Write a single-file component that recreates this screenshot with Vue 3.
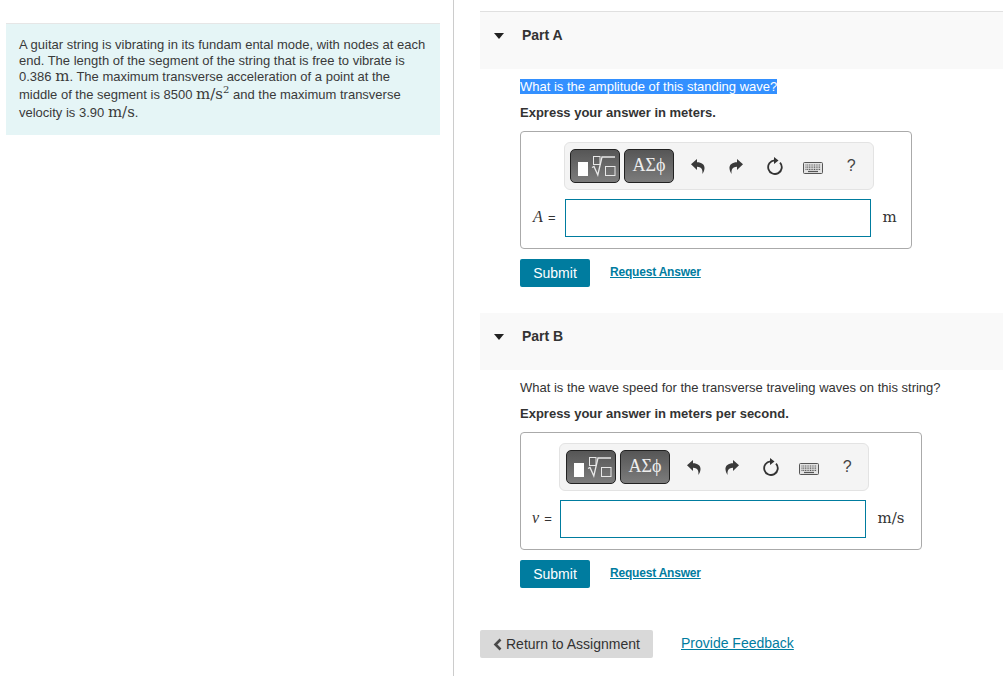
<template>
  <div class="page">
    <!-- problem statement -->
    <aside class="left">
      <div class="intro">
        <p>
          A guitar string is vibrating in its fundam ental mode, with nodes at each
          end. The length of the segment of the string that is free to vibrate is
          0.386 <span class="math">m</span>. The maximum transverse acceleration of a point at the
          middle of the segment is 8500 <span class="math tall">m/s<sup>2</sup></span> and the maximum transverse
          velocity is 3.90 <span class="math tall">m/s</span>.
        </p>
      </div>
    </aside>

    <main class="right">
      <section v-for="part in parts" :key="part.name" class="part" :class="part.cls">
        <header class="part-head">
          <span class="caret"></span>
          <h2 class="part-title">{{ part.name }}</h2>
        </header>

        <div class="part-body">
          <p class="question">
            <span :class="{ selected: part.selected }">{{ part.question }}</span>
          </p>
          <p class="express">{{ part.express }}</p>

          <div class="answer-box">
            <div class="toolbar">
              <button type="button" class="tool-btn">
                <svg width="48" height="32" viewBox="0 0 48 32">
                  <rect x="7" y="12" width="10" height="14" fill="#fff" />
                  <rect x="22.500" y="6.500" width="6.500" height="8" fill="none" stroke="#e8e8e8" />
                  <path d="M21 17.500l2-1 3.800 8.500 4.200-18h13" fill="none" stroke="#e8e8e8" stroke-width="1.300" />
                  <rect x="34.500" y="16.500" width="9.500" height="9" fill="none" stroke="#e8e8e8" />
                </svg>
              </button>
              <button type="button" class="tool-btn greek">ΑΣϕ</button>

              <span class="tool-icon">
                <svg width="14" height="15" viewBox="0 0 14 15">
                  <path d="M0 5.200L6 0V3.200C10.500 3.200 14 5.500 13.500 9.500C13.300 11.500 12.500 13.500 11.300 15C11.800 12 11.500 8 6 7.800V11Z" fill="#3a3a3a" />
                </svg>
              </span>
              <span class="tool-icon">
                <svg width="14" height="15" viewBox="0 0 14 15">
                  <path d="M14 5.200L8 0V3.200C3.500 3.200 0 5.500 0.500 9.500C0.700 11.500 1.500 13.500 2.700 15C2.200 12 2.500 8 8 7.800V11Z" fill="#3a3a3a" />
                </svg>
              </span>
              <span class="tool-icon">
                <svg width="16" height="18" viewBox="0 0 16 18">
                  <path d="M7.500 3.400A6.800 6.800 0 1 0 13 5.600" fill="none" stroke="#333" stroke-width="1.800" />
                  <path d="M7 0L11.500 3.400 7 7Z" fill="#333" />
                </svg>
              </span>
              <span class="tool-icon keys">
                <svg width="20" height="12" viewBox="0 0 20 12">
                  <rect x="0.500" y="0.500" width="19" height="11" rx="1" fill="#e2e2e2" stroke="#555" />
                  <path d="M2.500 3h15M2.500 5.200h15M2.500 7.400h15" stroke="#555" stroke-width="1.200" stroke-dasharray="1 0.700" />
                  <path d="M5 9.500h10" stroke="#555" stroke-width="1.200" />
                </svg>
              </span>
              <span class="tool-icon help">?</span>
            </div>

            <div class="answer-row">
              <label class="var-label"><i>{{ part.symbol }}</i> =</label>
              <input class="answer-input" type="text" />
              <span class="unit">{{ part.unit }}</span>
            </div>
          </div>

          <div class="actions">
            <button type="button" class="submit">Submit</button>
            <a class="request" href="#">Request Answer</a>
          </div>
        </div>
      </section>

      <footer class="bottom">
        <button type="button" class="back">
          <svg width="9" height="13" viewBox="0 0 9 13">
            <path d="M7.500 1.500L2.500 6.500l5 5" fill="none" stroke="#4a4a4a" stroke-width="2.600" />
          </svg>
          Return to Assignment
        </button>
        <a class="feedback" href="#">Provide Feedback</a>
      </footer>
    </main>
  </div>
</template>

<script setup>
const parts = [
  {
    name: 'Part A',
    cls: 'part-a',
    selected: true,
    question: 'What is the amplitude of this standing wave?',
    express: 'Express your answer in meters.',
    symbol: 'A',
    unit: 'm'
  },
  {
    name: 'Part B',
    cls: 'part-b',
    selected: false,
    question: 'What is the wave speed for the transverse traveling waves on this string?',
    express: 'Express your answer in meters per second.',
    symbol: 'v',
    unit: 'm/s'
  }
]
</script>

<style>
html,
body {
  margin: 0;
  background: #fff;
}
</style>

<style scoped>
.page {
  display: flex;
  height: 676px;
  overflow: hidden;
  font-family: "Liberation Sans", Arial, sans-serif;
  font-size: 13px;
  color: #333;
}

.left {
  width: 454px;
  flex-shrink: 0;
  box-sizing: border-box;
  padding: 23px 13px 0 6px;
  border-right: 1px solid #ccc;
}

.intro {
  height: 86px;
  padding: 13px 13px 12px;
  border-top: 1px solid #e6e6e6;
  background: #e5f5f6;
}

.intro p {
  margin: 0;
  line-height: 16px;
  color: #3a3a3a;
}

.math {
  font-family: "DejaVu Serif", serif;
  font-size: 15px;
  line-height: 1;
}

.math.tall {
  display: inline-block;
  line-height: 18px;
}

.math sup {
  font-size: 10px;
  line-height: 0;
}

.right {
  flex: 1;
  min-width: 0;
  padding: 11px 0 0 26px;
}

.part-head {
  display: flex;
  align-items: flex-start;
  height: 57px;
  padding: 15px 0 0 14px;
  box-sizing: border-box;
  background: #f9f9f9;
}

.part-a .part-head {
  height: 58px;
  border-top: 1px solid #e0e0e0;
}

.caret {
  width: 0;
  height: 0;
  margin: 6px 18px 0 0;
  border-left: 5.500px solid transparent;
  border-right: 5.500px solid transparent;
  border-top: 6px solid #222;
}

.part-title {
  margin: 0;
  font-size: 14px;
  font-weight: bold;
  line-height: 16px;
  color: #333;
}

.part-body {
  padding: 10px 0 0 40px;
}

.part-b {
  margin-top: 26px;
}

.question {
  margin: 0;
  line-height: 16px;
}

.selected {
  background: #3390ff;
  color: #fff;
}

.express {
  margin: 10px 0 0;
  line-height: 16px;
  font-weight: bold;
}

.answer-box {
  box-sizing: border-box;
  height: 118px;
  margin-top: 10px;
  padding-top: 10px;
  border: 1px solid #aaa;
  border-radius: 4px;
}

.part-a .answer-box {
  width: 392px;
}

.part-b .answer-box {
  width: 402px;
}

.toolbar {
  display: flex;
  align-items: center;
  box-sizing: border-box;
  width: 310px;
  height: 48px;
  padding-left: 5px;
  border: 1px solid #e3e3e3;
  border-radius: 6px;
  background: #f4f4f4;
}

.part-a .toolbar {
  margin-left: 43px;
}

.part-b .toolbar {
  margin-left: 38px;
  padding-left: 6px;
}

.tool-btn {
  display: flex;
  align-items: center;
  justify-content: center;
  box-sizing: border-box;
  width: 50px;
  height: 34px;
  margin-right: 4px;
  padding: 0;
  border: 1px solid #222;
  border-radius: 5px;
  background: linear-gradient(#565656, #7c7c7c);
}

.greek {
  margin-right: 5px;
  padding-bottom: 2px;
  font-family: "Liberation Serif", serif;
  font-size: 18px;
  color: #eee;
}

.tool-icon {
  display: flex;
  align-items: center;
  justify-content: center;
  width: 38.250px;
  height: 34px;
}

.keys {
  padding-top: 3px;
  box-sizing: border-box;
}

.help {
  font-size: 16px;
  color: #444;
}

.answer-row {
  display: flex;
  align-items: center;
  margin-top: 9px;
}

.var-label {
  box-sizing: border-box;
  padding-left: 12px;
  padding-bottom: 2px;
  font-size: 13px;
}

.var-label i {
  margin-right: 1.500px;
  font-family: "Liberation Serif", serif;
  font-size: 16px;
}

.part-a .var-label {
  width: 44px;
}

.part-b .var-label {
  width: 39px;
  padding-left: 11px;
}

.answer-input {
  box-sizing: border-box;
  width: 306px;
  height: 38px;
  padding: 0 6px;
  border: 1px solid #007c9f;
  background: #fff;
  outline: none;
}

.unit {
  margin-left: 11.500px;
  padding-bottom: 2px;
  font-family: "DejaVu Serif", serif;
  font-size: 15px;
}

.actions {
  display: flex;
  align-items: center;
  margin-top: 10px;
}

.submit {
  width: 70px;
  height: 28px;
  padding: 0;
  border: none;
  border-radius: 2px;
  background: #007c9f;
  color: #fff;
  font-family: inherit;
  font-size: 14px;
}

.request {
  margin-left: 20px;
  padding-bottom: 3px;
  font-size: 12px;
  font-weight: bold;
  letter-spacing: -0.200px;
  color: #007c9f;
}

.bottom {
  display: flex;
  align-items: center;
  margin-top: 42px;
}

.back {
  display: flex;
  align-items: center;
  gap: 4px;
  box-sizing: border-box;
  width: 173px;
  height: 28px;
  padding: 0 0 0 13px;
  border: none;
  border-radius: 2px;
  background: #d9d9d9;
  color: #333;
  font-family: inherit;
  font-size: 14px;
}

.feedback {
  margin-left: 28px;
  padding-bottom: 2px;
  font-size: 14px;
  color: #007c9f;
}
</style>
